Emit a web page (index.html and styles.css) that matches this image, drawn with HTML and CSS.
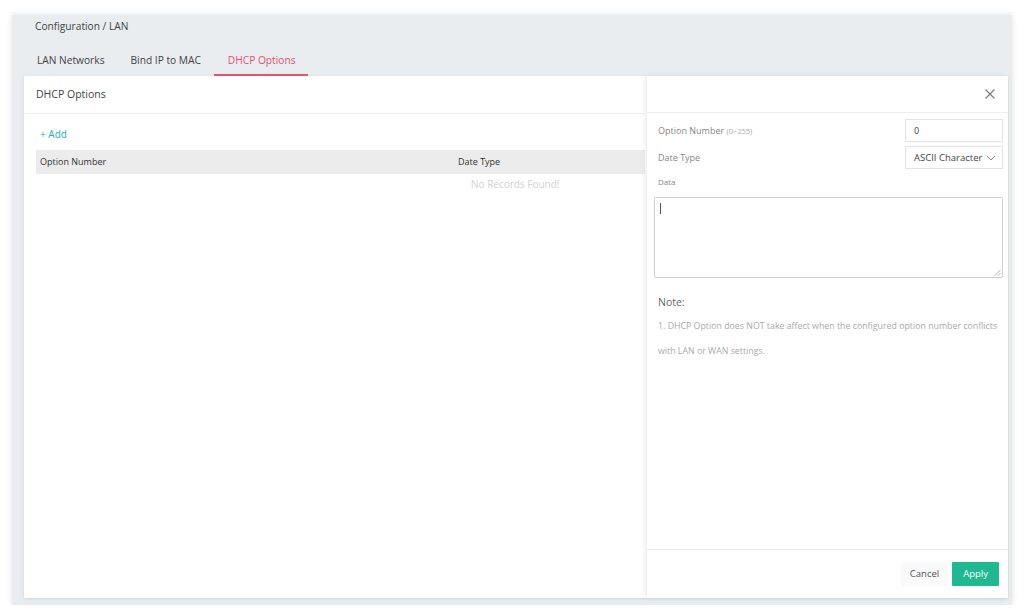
FILE: index.html
```html
<!DOCTYPE html>
<html>
<head>
<meta charset="utf-8">
<link rel="stylesheet" href="styles.css">
</head>
<body>
<div class="frame">
  <div class="top">
    <div class="crumb">Configuration / LAN</div>
    <div class="tabs">
      <div class="tab">LAN Networks</div>
      <div class="tab">Bind IP to MAC</div>
      <div class="tab active">DHCP Options</div>
    </div>
  </div>
  <div class="panel">
    <div class="main">
      <div class="main-head">DHCP Options</div>
      <div class="main-body">
        <div class="add">+ Add</div>
        <div class="thead">
          <div class="th th1">Option Number</div>
          <div class="th th2">Date Type</div>
        </div>
        <div class="empty">No Records Found!</div>
      </div>
    </div>
    <div class="drawer">
      <div class="d-head">
        <svg class="close" width="12" height="12" viewBox="0 0 12 12"><path d="M1.5 1.5L10.5 10.5M10.5 1.5L1.5 10.5" stroke="#777" stroke-width="1.1" fill="none"/></svg>
      </div>
      <div class="d-body">
        <div class="row">
          <div class="lbl">Option Number <span class="hint">(0~255)</span></div>
          <div class="input">0</div>
        </div>
        <div class="row">
          <div class="lbl">Date Type</div>
          <div class="input select">ASCII Character
            <svg width="10" height="6" viewBox="0 0 10 6"><path d="M1 1L5 5L9 1" stroke="#888" stroke-width="1" fill="none"/></svg>
          </div>
        </div>
        <div class="lbl data">Data</div>
        <div class="textarea"><span class="caret"></span>
          <svg class="grip" width="7" height="7" viewBox="0 0 7 7"><path d="M6.5 1L1 6.5M6.5 4L4 6.5" stroke="#999" stroke-width="0.8"/></svg>
        </div>
        <div class="note-title">Note:</div>
        <div class="note">1. DHCP Option does NOT take affect when the configured option number conflicts with LAN or WAN settings.</div>
      </div>
      <div class="d-foot">
        <div class="btn cancel">Cancel</div>
        <div class="btn apply">Apply</div>
      </div>
    </div>
  </div>
</div>
</body>
</html>
```

FILE: styles.css
```css
html, body {
  margin: 0;
  padding: 0;
  background: #ffffff;
  font-family: "Open Sans", "Noto Sans", sans-serif;
}
.frame {
  margin: 15px 12px 0 12px;
  width: 1000px;
  height: 590px;
  background: #e9edf0;
  box-shadow: 0 0 6px rgba(180, 190, 198, 0.45);
  display: flex;
  flex-direction: column;
}
.top {
  height: 61px;
  display: flex;
  flex-direction: column;
}
.crumb {
  font-size: 10.2px;
  color: #444;
  padding: 2px 0 0 23px;
  height: 18px;
  line-height: 18px;
}
.tabs {
  display: flex;
  padding-left: 12px;
  margin-top: 16px;
}
.tab {
  font-size: 10.2px;
  color: #444;
  padding: 0 13px;
  height: 25px;
  line-height: 18px;
  box-sizing: border-box;
}
.tab.active {
  color: #e8506a;
  border-bottom: 2px solid #e8506a;
  padding: 0 12px 0 14px;
}
.panel {
  margin: 0 4px 7px 12px;
  flex: 1;
  background: #ffffff;
  display: flex;
  box-shadow: 0 1px 3px rgba(170, 180, 188, 0.4);
}
.main {
  width: 621px;
  display: flex;
  flex-direction: column;
}
.main-head {
  height: 37px;
  line-height: 37px;
  border-bottom: 1px solid #eeeeee;
  font-size: 10.5px;
  color: #444;
  padding-left: 12px;
}
.main-body {
  padding: 12px 0 0 12px;
}
.add {
  font-size: 10px;
  color: #2aa9b5;
  height: 17px;
  line-height: 17px;
  padding-left: 4px;
}
.thead {
  margin-top: 7px;
  height: 24px;
  background: #ececec;
  position: relative;
}
.th {
  position: absolute;
  top: 0;
  line-height: 24px;
  font-size: 9px;
  color: #333;
}
.th1 { left: 4px; }
.th2 { left: 422px; }
.empty {
  margin-left: 435px;
  font-size: 10px;
  color: #d2d2d2;
  line-height: 20px;
  margin-top: 0;
}
.drawer {
  margin-left: 2px;
  flex: 1;
  display: flex;
  flex-direction: column;
  box-shadow: -2px 0 4px rgba(200, 205, 210, 0.35);
  position: relative;
}
.d-head {
  height: 36px;
  border-bottom: 1px solid #eeeeee;
  display: flex;
  align-items: center;
  justify-content: flex-end;
  padding-right: 12px;
}
.d-body {
  flex: 1;
  padding: 6px 5px 0 7px;
}
.row {
  display: flex;
  align-items: center;
  justify-content: space-between;
  height: 23px;
  margin-bottom: 4px;
}
.lbl {
  font-size: 9px;
  color: #888;
  padding-left: 4px;
}
.hint {
  font-size: 7.5px;
  color: #aaa;
}
.input {
  width: 98px;
  height: 23px;
  box-sizing: border-box;
  border: 1px solid #e3e3e3;
  font-size: 9px;
  color: #444;
  line-height: 21px;
  padding-left: 8px;
  display: flex;
  align-items: center;
}
.select {
  justify-content: space-between;
  padding: 0 6px 0 8px;
  font-size: 9.5px;
}
.data {
  margin-top: 7px;
  height: 21px;
  line-height: 12px;
  font-size: 8px;
}
.textarea {
  height: 81px;
  border: 1px solid #cfcfcf;
  border-radius: 2px;
  position: relative;
  box-sizing: border-box;
}
.caret {
  position: absolute;
  left: 5px;
  top: 5px;
  width: 1px;
  height: 11px;
  background: #555;
}
.grip {
  position: absolute;
  right: 1px;
  bottom: 1px;
}
.note-title {
  margin-top: 17px;
  font-size: 10.5px;
  color: #666;
  padding-left: 4px;
  line-height: 14px;
}
.note {
  margin-top: 5px;
  font-size: 8.8px;
  color: #aaa;
  line-height: 25px;
  padding-left: 4px;
  padding-right: 4px;
}
.d-foot {
  height: 48px;
  border-top: 1px solid #eeeeee;
  display: flex;
  align-items: center;
  justify-content: flex-end;
  padding-right: 9px;
  gap: 4px;
}
.btn {
  height: 24px;
  line-height: 24px;
  font-size: 9.5px;
  padding: 0 9px;
  border-radius: 1px;
}
.cancel {
  color: #555;
  background: #fafafa;
}
.apply {
  background: #1fb890;
  color: #fff;
  padding: 0 11px;
}
```
